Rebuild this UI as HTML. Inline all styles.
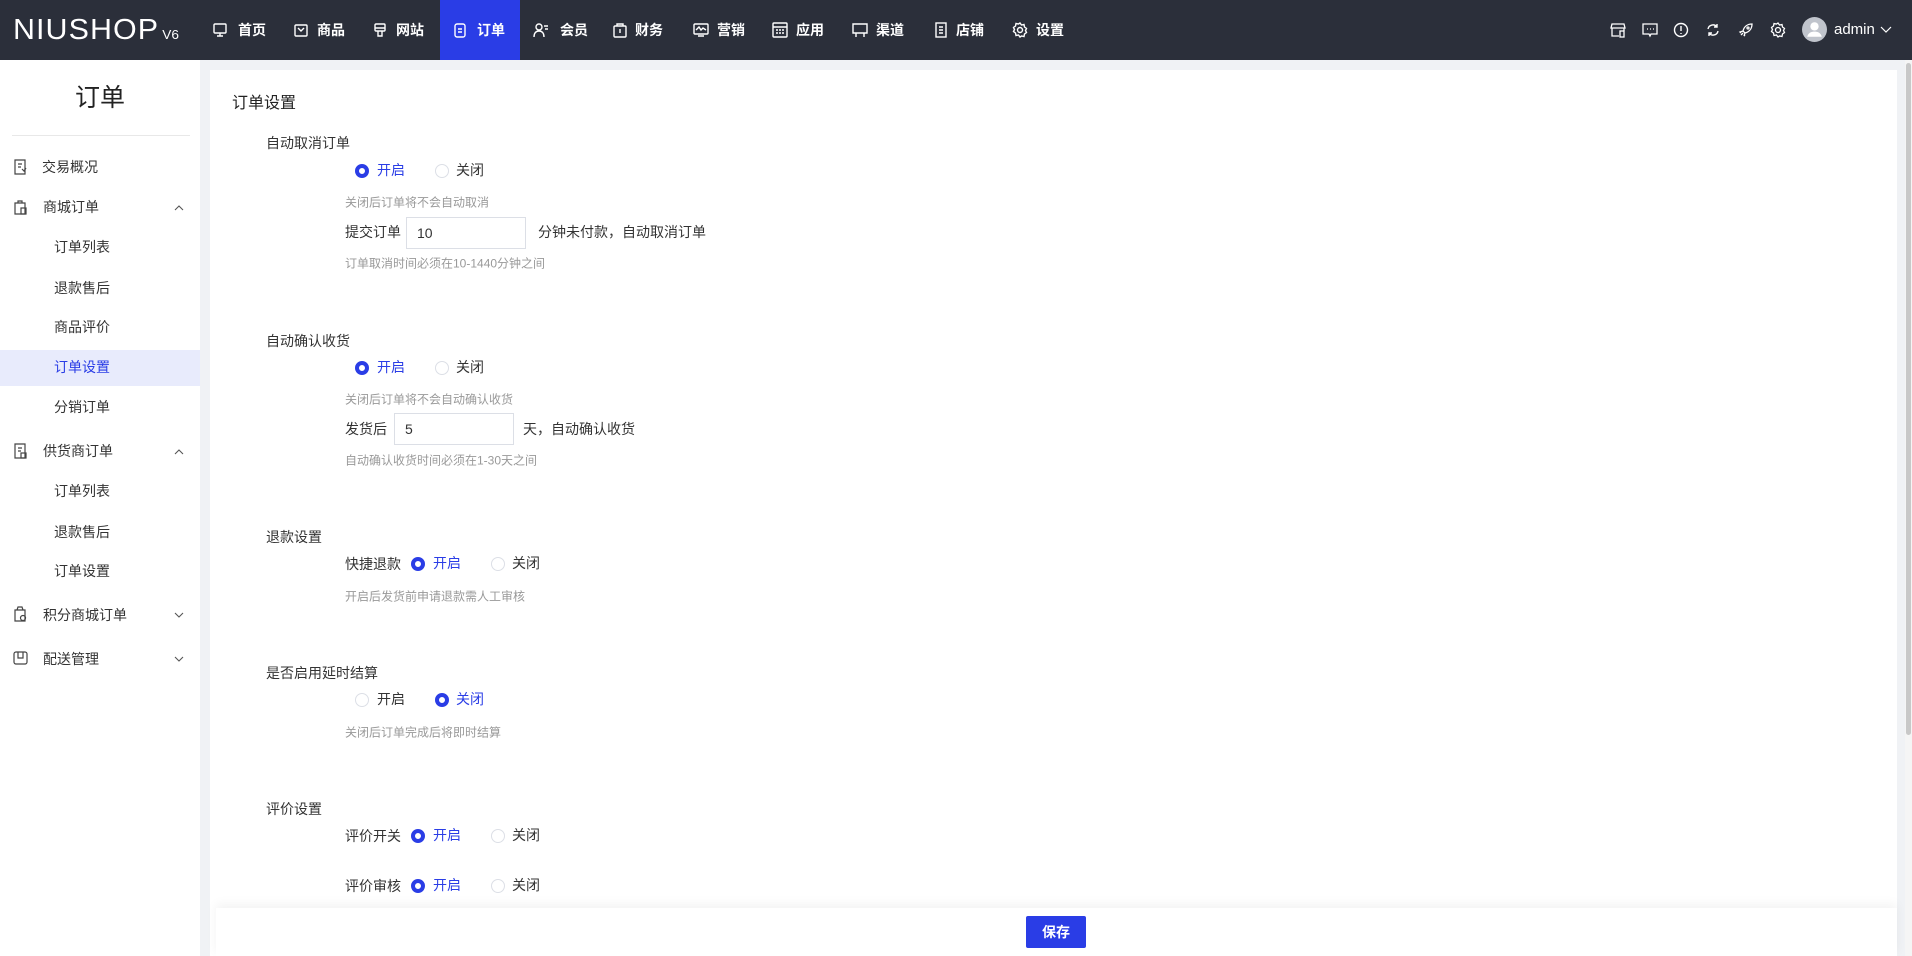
<!DOCTYPE html>
<html style="overflow:hidden;height:956px"><head><meta charset="utf-8"><style>
*{margin:0;padding:0;box-sizing:border-box}
body{width:1912px;height:956px;overflow:hidden;background:#f0f2f5;font-family:"Liberation Sans","Noto Sans CJK SC",sans-serif;font-size:14px;color:#333;position:relative}
.a{position:absolute;white-space:nowrap}
.hdr{position:absolute;left:0;top:0;width:1912px;height:60px;background:#2b2f3a}
.nav{color:#fff;font-size:14px;font-weight:bold;line-height:60px;top:0}
.ic{position:absolute;top:22px;width:16px;height:16px}
.side{position:absolute;left:0;top:60px;width:200px;height:896px;background:#fff}
.m{font-size:14px;color:#333;transform:translateY(-50%)}
.t{transform:translateY(-50%)}
.card{position:absolute;left:210px;top:70px;width:1687px;height:886px;background:#fff}
.r{position:absolute;width:14px;height:14px;border-radius:50%;border:1px solid #dcdfe6;background:#fff;transform:translateY(-50%)}
.r.on{border:4px solid #2a3de6}
.blue{color:#2a3de6}
.hint{font-size:12px;color:#999}
.inp{position:absolute;border:1px solid #dcdfe6;background:#fff;padding-left:10px;font-size:14px;color:#333}
</style></head><body>
<div class="hdr"></div>
<div class="a" style="left:13px;top:12px;color:#fff;font-size:29px;letter-spacing:1px;line-height:36px;transform:scaleX(1.05);transform-origin:left">NIUSHOP<span style="font-size:13px;margin-left:3px;letter-spacing:0">V6</span></div>
<div class="a" style="left:440px;top:0;width:80px;height:60px;background:#2a3de6"></div>
<svg class="ic" style="left:212px" viewBox="0 0 16 16" fill="none" stroke="#fff" stroke-width="1.4"><rect x="2" y="2" width="12" height="9" rx="1"/><path d="M8 11v3M5 14h6"/></svg>
<svg class="ic" style="left:293px" viewBox="0 0 16 16" fill="none" stroke="#fff" stroke-width="1.4"><rect x="2" y="3" width="12" height="11" rx="1"/><path d="M5 6l3 3 3-3"/></svg>
<svg class="ic" style="left:372px" viewBox="0 0 16 16" fill="none" stroke="#fff" stroke-width="1.4"><rect x="3" y="2" width="10" height="7" rx="1"/><path d="M3 6h10M6 9v5h4V9"/></svg>
<svg class="ic" style="left:452px" viewBox="0 0 16 16" fill="none" stroke="#fff" stroke-width="1.4"><rect x="3" y="2" width="10" height="13" rx="2"/><path d="M6 7h4M6 10h4"/></svg>
<svg class="ic" style="left:533px" viewBox="0 0 16 16" fill="none" stroke="#fff" stroke-width="1.4"><circle cx="6" cy="5" r="3"/><path d="M1 15c0-4 2-6 5-6s5 2 5 6M11 4h4M12 7h3"/></svg>
<svg class="ic" style="left:612px" viewBox="0 0 16 16" fill="none" stroke="#fff" stroke-width="1.4"><rect x="2" y="4" width="12" height="11" rx="1"/><path d="M5 4V2h6v2M8 7v4"/></svg>
<svg class="ic" style="left:693px" viewBox="0 0 16 16" fill="none" stroke="#fff" stroke-width="1.4"><rect x="1" y="2" width="14" height="10" rx="1"/><path d="M3 8l3-3 2 3 2-2 3 2M5 14h6"/></svg>
<svg class="ic" style="left:772px" viewBox="0 0 16 16" fill="none" stroke="#fff" stroke-width="1.4"><rect x="1" y="1" width="14" height="14" rx="1"/><path d="M1 5h14M4 8h2M7 8h2M10 8h2M4 11h2M7 11h2M10 11h2"/></svg>
<svg class="ic" style="left:852px" viewBox="0 0 16 16" fill="none" stroke="#fff" stroke-width="1.4"><path d="M1 2h14v9H1zM4 11v4M12 11v4"/></svg>
<svg class="ic" style="left:933px" viewBox="0 0 16 16" fill="none" stroke="#fff" stroke-width="1.4"><rect x="3" y="1" width="10" height="14"/><path d="M6 5h4M6 8h4M6 11h4"/></svg>
<svg class="ic" style="left:1012px" viewBox="0 0 16 16" fill="none" stroke="#fff" stroke-width="1.4"><circle cx="8" cy="8" r="2.5"/><path d="M8 1l1.5 2 2.5-.5.5 2.5 2 1.5-1 2 1 2-2 1.5-.5 2.5-2.5-.5L8 15l-1.5-2-2.5.5-.5-2.5-2-1.5 1-2-1-2 2-1.5.5-2.5 2.5.5z"/></svg>
<div class="a nav" style="left:238px">首页</div>
<div class="a nav" style="left:317px">商品</div>
<div class="a nav" style="left:396px">网站</div>
<div class="a nav" style="left:477px">订单</div>
<div class="a nav" style="left:560px">会员</div>
<div class="a nav" style="left:635px">财务</div>
<div class="a nav" style="left:717px">营销</div>
<div class="a nav" style="left:796px">应用</div>
<div class="a nav" style="left:876px">渠道</div>
<div class="a nav" style="left:956px">店铺</div>
<div class="a nav" style="left:1036px">设置</div>
<svg class="ic" style="left:1610px" viewBox="0 0 16 16" fill="none" stroke="#fff" stroke-width="1.3"><path d="M2 2h12l1 4H1zM2 6v8h7M14 6v3"/><rect x="10" y="9" width="4" height="6"/></svg>
<svg class="ic" style="left:1642px" viewBox="0 0 16 16" fill="none" stroke="#fff" stroke-width="1.3"><path d="M1 2h14v10H9l-1 2-1-2H1z"/><path d="M5 7h1M8 7h1M11 7h1"/></svg>
<svg class="ic" style="left:1673px" viewBox="0 0 16 16" fill="none" stroke="#fff" stroke-width="1.4"><circle cx="8" cy="8" r="6.5"/><path d="M8 4v5M8 11v1"/></svg>
<svg class="ic" style="left:1705px" viewBox="0 0 16 16" fill="none" stroke="#fff" stroke-width="1.4"><path d="M3 7a5 5 0 0 1 9-2M13 9a5 5 0 0 1-9 2M12 2v3H9M4 14v-3h3"/></svg>
<svg class="ic" style="left:1738px" viewBox="0 0 16 16" fill="none" stroke="#fff" stroke-width="1.3"><path d="M14 2c-5 0-8 3-9 7l2 2c4-1 7-4 7-9zM5 9l-3 1 1 1M7 11l-1 3 1-1M3 13l2-2"/><circle cx="10" cy="6" r="1"/></svg>
<svg class="ic" style="left:1770px" viewBox="0 0 16 16" fill="none" stroke="#fff" stroke-width="1.3"><circle cx="8" cy="8" r="2.5"/><path d="M8 1l1.5 2 2.5-.5.5 2.5 2 1.5-1 2 1 2-2 1.5-.5 2.5-2.5-.5L8 15l-1.5-2-2.5.5-.5-2.5-2-1.5 1-2-1-2 2-1.5.5-2.5 2.5.5z"/></svg>
<svg class="a" style="left:1802px;top:17px" width="25" height="25" viewBox="0 0 24 24"><circle cx="12" cy="12" r="12" fill="#c0c4cc"/><circle cx="12" cy="9" r="4" fill="#fff"/><path d="M5 19c1-4 4-5 7-5s6 1 7 5z" fill="#fff"/></svg>
<div class="a" style="left:1834px;top:0;line-height:60px;color:#fff;font-size:15px">admin</div>
<svg class="a" style="left:1880px;top:25px" width="12" height="10" viewBox="0 0 12 10" fill="none" stroke="#fff" stroke-width="1.2"><path d="M1 2l5 5 5-5"/></svg>

<div class="side"></div>
<div class="a t" style="left:0;width:200px;text-align:center;top:96px;font-size:25px;color:#222">订单</div>
<div class="a" style="left:12px;top:135px;width:178px;height:1px;background:#e8e8e8"></div>
<div class="a" style="left:0;top:350px;width:200px;height:36px;background:#e8ebfc"></div>
<svg class="a" style="left:13px;top:159px" width="15" height="16" viewBox="0 0 15 16" fill="none" stroke="#444" stroke-width="1.2"><path d="M2 1h10v14H2zM5 5h4M5 8h3M9 10l2 2 2-3"/></svg>
<svg class="a" style="left:13px;top:199px" width="15" height="16" viewBox="0 0 15 16" fill="none" stroke="#444" stroke-width="1.2"><path d="M2 4h10v11H2zM5 4V2h4v2"/><rect x="8" y="9" width="5" height="6"/></svg>
<svg class="a" style="left:13px;top:443px" width="15" height="16" viewBox="0 0 15 16" fill="none" stroke="#444" stroke-width="1.2"><path d="M2 1h10v14H2zM5 5h4M5 8h3"/><rect x="8" y="10" width="5" height="5"/></svg>
<svg class="a" style="left:13px;top:606px" width="15" height="16" viewBox="0 0 15 16" fill="none" stroke="#444" stroke-width="1.2"><path d="M4 4l1-3h4l1 3M2 4h10v11H2z"/><circle cx="10" cy="12" r="2.5"/></svg>
<svg class="a" style="left:13px;top:650px" width="15" height="16" viewBox="0 0 15 16" fill="none" stroke="#444" stroke-width="1.2"><rect x="1" y="2" width="13" height="12" rx="2"/><path d="M5 2v6h5V2"/></svg>
<div class="a m" style="left:42px;top:167px">交易概况</div>
<div class="a m" style="left:43px;top:207px">商城订单</div>
<div class="a m" style="left:54px;top:247px">订单列表</div>
<div class="a m" style="left:54px;top:288px">退款售后</div>
<div class="a m" style="left:54px;top:327px">商品评价</div>
<div class="a m blue" style="left:54px;top:367px">订单设置</div>
<div class="a m" style="left:54px;top:407px">分销订单</div>
<div class="a m" style="left:43px;top:451px">供货商订单</div>
<div class="a m" style="left:54px;top:491px">订单列表</div>
<div class="a m" style="left:54px;top:532px">退款售后</div>
<div class="a m" style="left:54px;top:571px">订单设置</div>
<div class="a m" style="left:43px;top:615px">积分商城订单</div>
<div class="a m" style="left:43px;top:659px">配送管理</div>
<svg class="a" style="left:174px;top:204px" width="10" height="7" viewBox="0 0 10 7" fill="none" stroke="#555" stroke-width="1.1"><path d="M1 6l4-4 4 4"/></svg>
<svg class="a" style="left:174px;top:448px" width="10" height="7" viewBox="0 0 10 7" fill="none" stroke="#555" stroke-width="1.1"><path d="M1 6l4-4 4 4"/></svg>
<svg class="a" style="left:174px;top:612px" width="10" height="7" viewBox="0 0 10 7" fill="none" stroke="#555" stroke-width="1.1"><path d="M1 1l4 4 4-4"/></svg>
<svg class="a" style="left:174px;top:656px" width="10" height="7" viewBox="0 0 10 7" fill="none" stroke="#555" stroke-width="1.1"><path d="M1 1l4 4 4-4"/></svg>

<div class="card"></div>
<div class="a" style="left:1905px;top:60px;width:7px;height:896px;background:#f5f5f5"></div>
<div class="a" style="left:1906px;top:63px;width:5px;height:672px;background:#c8c8c8;border-radius:3px"></div>
<div class="a t" style="left:232px;top:101px;font-size:16px;color:#222">订单设置</div>

<div class="a t" style="left:266px;top:143px">自动取消订单</div>
<div class="r on" style="left:355px;top:171px"></div><div class="a t blue" style="left:377px;top:170px">开启</div>
<div class="r" style="left:435px;top:171px"></div><div class="a t" style="left:456px;top:170px">关闭</div>
<div class="a t hint" style="left:345px;top:202px">关闭后订单将不会自动取消</div>
<div class="a t" style="left:345px;top:232px">提交订单</div>
<div class="inp" style="left:406px;top:217px;width:120px;height:32px;line-height:30px">10</div>
<div class="a t" style="left:538px;top:232px">分钟未付款，自动取消订单</div>
<div class="a t hint" style="left:345px;top:263px">订单取消时间必须在10-1440分钟之间</div>

<div class="a t" style="left:266px;top:341px">自动确认收货</div>
<div class="r on" style="left:355px;top:368px"></div><div class="a t blue" style="left:377px;top:367px">开启</div>
<div class="r" style="left:435px;top:368px"></div><div class="a t" style="left:456px;top:367px">关闭</div>
<div class="a t hint" style="left:345px;top:399px">关闭后订单将不会自动确认收货</div>
<div class="a t" style="left:345px;top:429px">发货后</div>
<div class="inp" style="left:394px;top:413px;width:120px;height:32px;line-height:30px">5</div>
<div class="a t" style="left:523px;top:429px">天，自动确认收货</div>
<div class="a t hint" style="left:345px;top:460px">自动确认收货时间必须在1-30天之间</div>

<div class="a t" style="left:266px;top:537px">退款设置</div>
<div class="a t" style="left:345px;top:564px">快捷退款</div>
<div class="r on" style="left:411px;top:564px"></div><div class="a t blue" style="left:433px;top:563px">开启</div>
<div class="r" style="left:491px;top:564px"></div><div class="a t" style="left:512px;top:563px">关闭</div>
<div class="a t hint" style="left:345px;top:596px">开启后发货前申请退款需人工审核</div>

<div class="a t" style="left:266px;top:673px">是否启用延时结算</div>
<div class="r" style="left:355px;top:700px"></div><div class="a t" style="left:377px;top:699px">开启</div>
<div class="r on" style="left:435px;top:700px"></div><div class="a t blue" style="left:456px;top:699px">关闭</div>
<div class="a t hint" style="left:345px;top:732px">关闭后订单完成后将即时结算</div>

<div class="a t" style="left:266px;top:809px">评价设置</div>
<div class="a t" style="left:345px;top:836px">评价开关</div>
<div class="r on" style="left:411px;top:836px"></div><div class="a t blue" style="left:433px;top:835px">开启</div>
<div class="r" style="left:491px;top:836px"></div><div class="a t" style="left:512px;top:835px">关闭</div>
<div class="a t" style="left:345px;top:886px">评价审核</div>
<div class="r on" style="left:411px;top:886px"></div><div class="a t blue" style="left:433px;top:885px">开启</div>
<div class="r" style="left:491px;top:886px"></div><div class="a t" style="left:512px;top:885px">关闭</div>

<div class="a" style="left:216px;top:908px;width:1681px;height:48px;background:#fff;box-shadow:0 -4px 10px rgba(0,0,0,0.05)"></div>
<div class="a" style="left:1026px;top:916px;width:60px;height:32px;background:#2a3de6;border-radius:2px;color:#fff;font-weight:bold;text-align:center;line-height:32px;font-size:14px">保存</div>
</body></html>
